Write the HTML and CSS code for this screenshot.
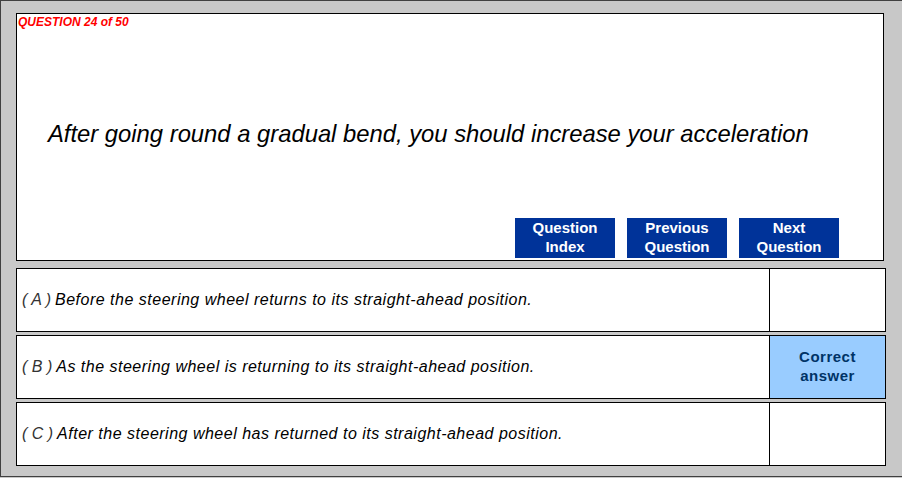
FILE: index.html
```html
<!DOCTYPE html>
<html lang="en">

<head>
    <meta charset="UTF-8">
    <meta name="viewport" content="width=device-width, initial-scale=1.0">
    <title>Question 24 of 50</title>
    <link rel="stylesheet" href="styles.css">
</head>

<body>
    <div class="frame">
        <div class="question-box">
            <div class="counter">QUESTION 24 of 50</div>
            <p class="question">After going round a gradual bend, you should increase your acceleration</p>
            <div class="nav">
                <button class="nav-btn">Question<br>Index</button>
                <button class="nav-btn">Previous<br>Question</button>
                <button class="nav-btn">Next<br>Question</button>
            </div>
        </div>
        <div class="answers">
            <div class="answer">
                <div class="answer-text"><span class="letter">( A )</span> Before the steering wheel returns to its straight-ahead position.</div>
                <div class="answer-mark"></div>
            </div>
            <div class="answer">
                <div class="answer-text"><span class="letter">( B )</span> As the steering wheel is returning to its straight-ahead position.</div>
                <div class="answer-mark correct">Correct<br>answer</div>
            </div>
            <div class="answer">
                <div class="answer-text"><span class="letter">( C )</span> After the steering wheel has returned to its straight-ahead position.</div>
                <div class="answer-mark"></div>
            </div>
        </div>
    </div>
</body>
</html>
```

FILE: styles.css
```css
body {
    font-family: "Liberation Sans", Arial, sans-serif;
    margin: 0;
    padding: 0;
    background-color: #c8c8c8;
}
.frame {
    width: 902px;
    height: 477px;
    box-sizing: border-box;
    padding: 12px 16px 0 15px;
    background: #c8c8c8;
    border-top: 1px solid #404040;
    border-left: 1px solid #404040;
    border-bottom: 1px solid #404040;
}
.question-box {
    height: 248px;
    box-sizing: border-box;
    border: 1px solid #000;
    background: white;
    display: flex;
    flex-direction: column;
    margin-right: 2px;
}
.counter {
    color: #ff0000;
    font-size: 12px;
    font-weight: bold;
    font-style: italic;
    padding: 2px 0 0 1px;
    line-height: 12px;
}
.question {
    margin: 92px 0 0 31px;
    font-size: 23.8px;
    font-style: italic;
    line-height: 28px;
    color: #000;
}
.nav {
    margin-top: auto;
    display: flex;
    justify-content: flex-end;
    gap: 12px;
    padding: 0 44px 2px 0;
}
.nav-btn {
    width: 100px;
    height: 40px;
    padding: 0 0 2px;
    background: #003399;
    color: white;
    border: none;
    font-family: "Liberation Sans", Arial, sans-serif;
    font-size: 15px;
    font-weight: bold;
    line-height: 19px;
    cursor: pointer;
}
.answers {
    margin-top: 7px;
    display: flex;
    flex-direction: column;
    gap: 3px;
}
.answer {
    height: 64px;
    box-sizing: border-box;
    border: 1px solid #000;
    background: white;
    display: grid;
    grid-template-columns: 1fr 116px;
}
.answer-text {
    display: flex;
    align-items: center;
    padding-left: 5px;
    font-size: 16px;
    font-style: italic;
    letter-spacing: 0.5px;
    color: #000;
}
.letter {
    color: #333;
    font-weight: 300;
    letter-spacing: 0;
    margin-right: 4px;
}
.answer-mark {
    border-left: 1px solid #000;
    display: flex;
    align-items: center;
    justify-content: center;
    text-align: center;
}
.correct {
    background: #99ccff;
    color: #003366;
    font-size: 15px;
    font-weight: bold;
    letter-spacing: 0.5px;
    line-height: 19px;
    padding-bottom: 2px;
}
```
